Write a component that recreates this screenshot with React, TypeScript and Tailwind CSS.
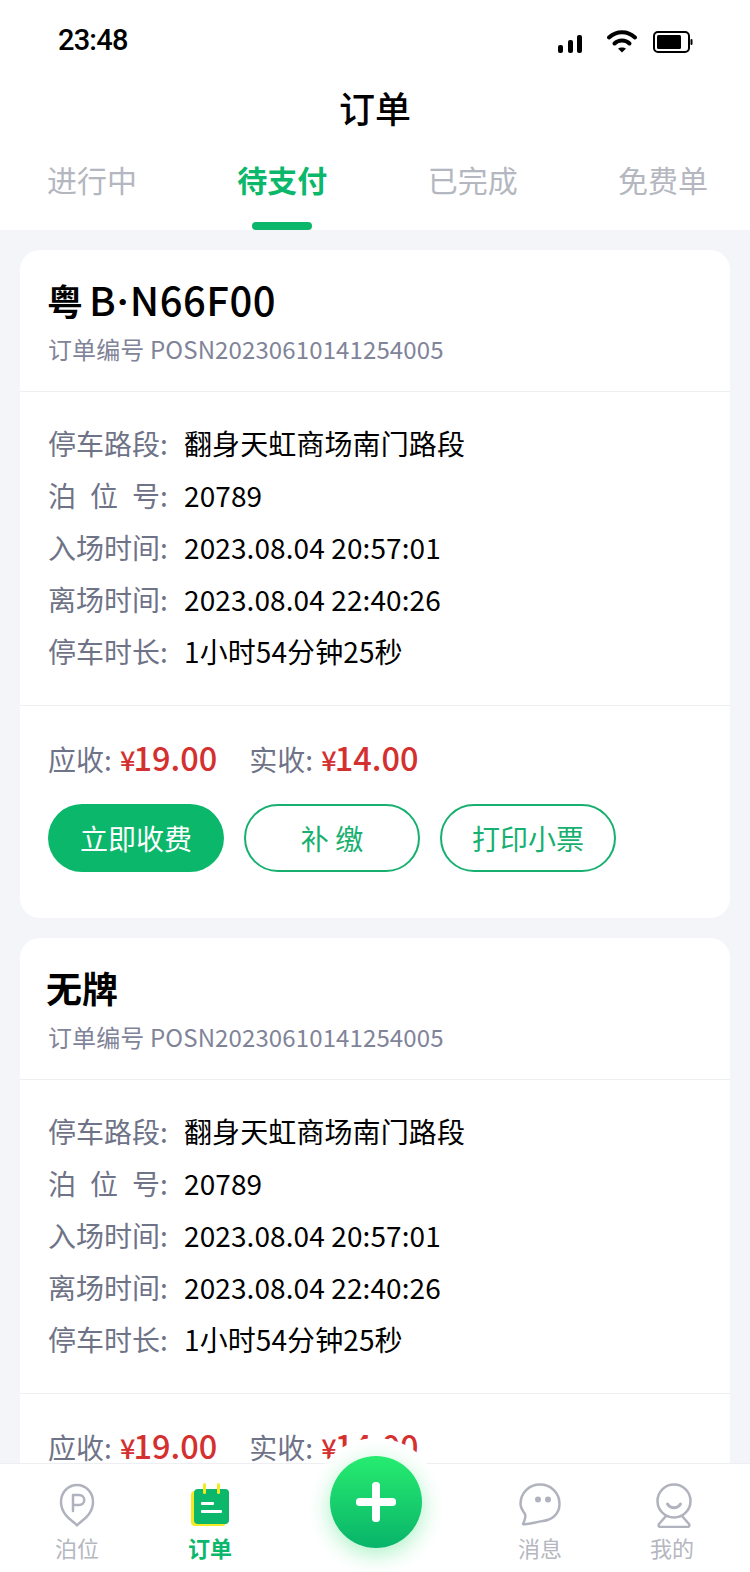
const cjk = "font-['Noto_Sans_CJK_SC','Noto_Sans',sans-serif]";

const tabs = ["进行中", "待支付", "已完成", "免费单"];

const orders = [
  { province: "粤", city: "B", number: "N66F00", plate: "" },
  { province: "", city: "", number: "", plate: "无牌" },
];

const rows = [
  { label: "停车路段", value: "翻身天虹商场南门路段" },
  { label: "泊位号", value: "20789", justify: true },
  { label: "入场时间", value: "2023.08.04 20:57:01" },
  { label: "离场时间", value: "2023.08.04 22:40:26" },
  { label: "停车时长", value: "1小时54分钟25秒" },
];

function StatusBar() {
  return (
    <div className="flex h-[78px] items-start justify-between pl-[58px] pr-[57px] pt-[22px]">
      <span className="font-['Roboto',sans-serif] text-[29px] leading-[36px] font-medium tracking-[-0.8px] text-black">23:48</span>
      <div className="flex items-end gap-[16px] pt-[8px]">
        <svg className="mr-[8px]" width="25" height="18" viewBox="0 0 25 18" fill="#000">
          <rect x="0" y="10" width="5" height="8" rx="2" />
          <rect x="10" y="5" width="5" height="13" rx="2" />
          <rect x="19" y="0" width="5" height="18" rx="2" />
        </svg>
        <svg width="30" height="23" viewBox="0 0 30 23" fill="none" stroke="#000" strokeWidth="4" strokeLinecap="round">
          <path d="M2 7.5C9.5 0.5 20.5 0.5 28 7.5" />
          <path d="M7.5 13.5C11.5 9.5 18.5 9.5 22.5 13.5" />
          <path d="M11 18.5L15 22.5L19 18.5C17 17 13 17 11 18.5Z" fill="#000" stroke="none" />
        </svg>
        <svg width="40" height="22" viewBox="0 0 40 22" fill="none">
          <rect x="1" y="1" width="35" height="20" rx="4" stroke="#000" strokeWidth="2" />
          <rect x="4" y="4" width="24" height="14" rx="1.5" fill="#000" />
          <rect x="37.5" y="8" width="2" height="6" rx="1" fill="#000" />
        </svg>
      </div>
    </div>
  );
}

function Header() {
  return (
    <div className="h-[230px] shrink-0 bg-white">
      <StatusBar />
      <h1 className="h-[58px] text-center text-[36px] leading-[58px] font-medium text-black">订单</h1>
      <div className="flex justify-between pl-[47px] pr-[42px] pt-[21px]">
        {tabs.map((tab, index) => (
          <div key={index} className="relative h-[73px] w-[90px] text-center">
            <span className={index === 1 ? "text-[30px] leading-[44px] font-bold text-[#0bb76a]" : "text-[30px] leading-[44px] text-[#b4b7c0]"}>
              {tab}
            </span>
            {index === 1 && (
              <div className="absolute bottom-0 left-[15px] h-[8px] w-[60px] rounded-full bg-[#0bb76a]" />
            )}
          </div>
        ))}
      </div>
    </div>
  );
}

function OrderCard({ province, city, number, plate }: { province: string; city: string; number: string; plate: string }) {
  return (
    <div className="rounded-[20px] bg-white">
      <div className="h-[142px] border-b border-[#eeeff2] px-[28px] pt-[21px]">
        <div className="-ml-[1px] flex h-[56px] items-baseline leading-[56px] text-black">
          {plate ? (
            <span className="-ml-[1px] text-[36px] font-bold">{plate}</span>
          ) : (
            <>
              <span className="text-[36px] font-bold">{province}</span>
              <span className="ml-[6px] text-[40px] font-medium">{city}</span>
              <span className="font-['Roboto',sans-serif] mx-[1px] text-[40px] font-bold">·</span>
              <span className="text-[40px] font-medium tracking-[0.5px]">{number}</span>
            </>
          )}
        </div>
        <div className="mt-[4px] text-[24px] leading-[36px] tracking-[0.12px] text-[#7f8499]">订单编号 POSN20230610141254005</div>
      </div>
      <div className="h-[314px] border-b border-[#eeeff2] px-[28px] pt-[25px]">
        {rows.map((row, index) => (
          <div key={index} className="flex h-[52px] items-center text-[28px] leading-[52px]">
            {row.justify ? (
              <span className="flex w-[112px] justify-between text-[#6f7387]">
                <span>泊</span>
                <span>位</span>
                <span>号</span>
              </span>
            ) : (
              <span className="w-[112px] text-[#6f7387]">{row.label}</span>
            )}
            <span className="w-[24px] text-[#6f7387]">:</span>
            <span className="tracking-[0.1px] text-black">{row.value}</span>
          </div>
        ))}
      </div>
      <div className="h-[212px] px-[28px] pt-[28px]">
        <div className="flex h-[48px] items-center gap-[32px]">
          <span className="text-[28px] leading-[48px] text-[#6f7387]">
            应收: <span className="ml-[2px] text-[27px] font-medium text-[#d43030]">¥</span><span className="-ml-[2px] text-[32.5px] font-medium text-[#d43030]">19.00</span>
          </span>
          <span className="text-[28px] leading-[48px] text-[#6f7387]">
            实收: <span className="ml-[2px] text-[27px] font-medium text-[#d43030]">¥</span><span className="-ml-[2px] text-[32.5px] font-medium text-[#d43030]">14.00</span>
          </span>
        </div>
        <div className="mt-[22px] flex gap-[20px]">
          <button className="h-[68px] w-[176px] rounded-full bg-[#0bb76a] text-[28px] text-white">立即收费</button>
          <button className="h-[68px] w-[176px] rounded-full border-2 border-[#18b070] text-[28px] text-[#18b070]">补 缴</button>
          <button className="h-[68px] w-[176px] rounded-full border-2 border-[#18b070] text-[28px] text-[#18b070]">打印小票</button>
        </div>
      </div>
    </div>
  );
}

function BottomNav() {
  return (
    <div className="relative h-[109px] shrink-0 border-t border-[#eeeff2] bg-white">
      <div className="absolute -top-[26px] left-[312px] h-[128px] w-[128px] rounded-full bg-white" />
      <button className="absolute -top-[8px] left-[330px] flex h-[92px] w-[92px] items-center justify-center rounded-full bg-gradient-to-b from-[#26ec6f] to-[#07b469] shadow-[0_6px_22px_rgba(40,220,110,0.4)]">
        <svg width="42" height="42" viewBox="0 0 42 42" fill="#fff">
          <rect x="17" y="1" width="8" height="40" rx="3.5" />
          <rect x="1" y="17" width="40" height="8" rx="3.5" />
        </svg>
      </button>
      <div className="grid h-full grid-cols-[154px_112px_208px_132px_132px] text-[22px]">
        <div className="flex flex-col items-center pt-[19px] text-[#b4b7c0]">
          <div className="h-[46px]">
            <svg width="36" height="44" viewBox="0 0 36 44" fill="none" stroke="#b0b3bd" strokeWidth="2.5" strokeLinejoin="round" strokeLinecap="round">
              <path d="M18 42.5C16 39 2 33 2 19C2 9.5 9 2 18 2C27 2 34 9.5 34 19C34 33 20 39 18 42.5Z" />
              <path d="M14 28V12H20C27 12 27 22 20 22H14" />
            </svg>
          </div>
          <span className="mt-[2px] leading-[32px]">泊位</span>
        </div>
        <div className="flex flex-col items-center pt-[19px] font-bold text-[#0bb76a]">
          <div className="h-[46px]">
            <svg width="38" height="43" viewBox="0 0 38 43">
              <rect x="0" y="8" width="35" height="35" rx="4" fill="#f5ea21" />
              <rect x="3" y="6" width="35" height="35" rx="4" fill="#0bb76a" />
              <rect x="12" y="0" width="3" height="11" rx="1.5" fill="#f5ea21" />
              <rect x="26" y="0" width="3" height="11" rx="1.5" fill="#f5ea21" />
              <rect x="10" y="19" width="13" height="3" rx="1" fill="#fff" />
              <rect x="10" y="27" width="21" height="3" rx="1" fill="#fff" />
            </svg>
          </div>
          <span className="mt-[2px] leading-[32px]">订单</span>
        </div>
        <div />
        <div className="flex flex-col items-center pt-[19px] text-[#b4b7c0]">
          <div className="h-[46px]">
            <svg width="42" height="44" viewBox="0 0 42 44" fill="none" stroke="#b0b3bd" strokeWidth="2.5" strokeLinejoin="round">
              <path d="M4 41C6 37 7 34 6 31C3 27 1.5 23 1.5 21C1.5 10 10 1.5 21 1.5C32 1.5 40.5 10 40.5 21C40.5 32 32 37 24 38C16 39 9 42 4 41Z" />
              <circle cx="19" cy="16.5" r="3" fill="#b0b3bd" stroke="none" />
              <circle cx="29" cy="16.5" r="3" fill="#b0b3bd" stroke="none" />
            </svg>
          </div>
          <span className="mt-[2px] leading-[32px]">消息</span>
        </div>
        <div className="flex flex-col items-center pt-[19px] text-[#b4b7c0]">
          <div className="ml-[3px] h-[46px]">
            <svg width="36" height="45" viewBox="0 0 36 45" fill="none" stroke="#b0b3bd" strokeWidth="2.5" strokeLinecap="round" strokeLinejoin="round">
              <circle cx="18" cy="18" r="16.5" />
              <path d="M11.5 21C14.5 26 21.5 26 24.5 21" strokeWidth="3" />
              <path d="M10 33L3 41C2 43 3 44 5 44H31C33 44 34 43 33 41L26 33" />
            </svg>
          </div>
          <span className="mt-[2px] leading-[32px]">我的</span>
        </div>
      </div>
    </div>
  );
}

export default function App() {
  return (
    <div className={`flex h-[1572px] w-[750px] flex-col overflow-hidden bg-[#f4f5f8] ${cjk}`}>
      <Header />
      <div className="min-h-0 flex-1 overflow-hidden px-[20px] pt-[20px]">
        <div className="flex flex-col gap-[20px]">
          {orders.map((order, index) => (
            <OrderCard key={index} {...order} />
          ))}
        </div>
      </div>
      <BottomNav />
    </div>
  );
}
